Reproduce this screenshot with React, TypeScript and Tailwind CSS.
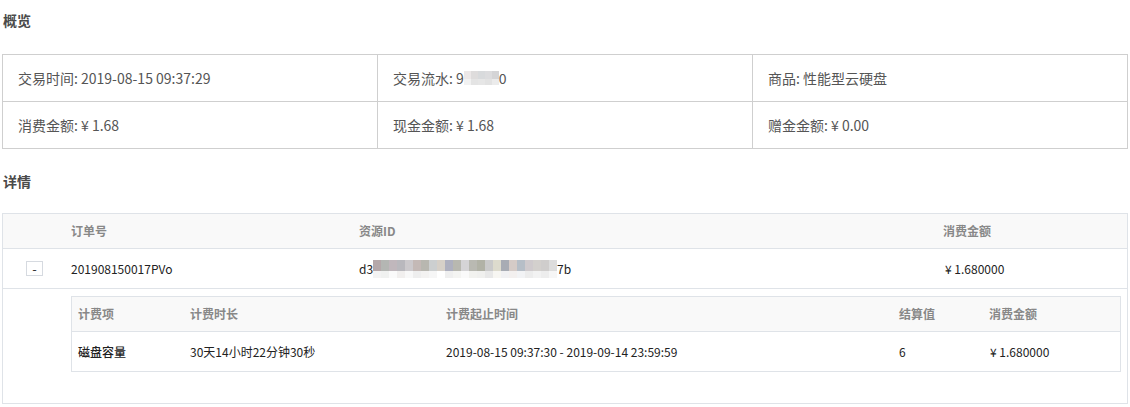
import React from "react";

const overview = [
  [
    { label: "交易时间", value: "2019-08-15 09:37:29" },
    { label: "交易流水", value: "serial" },
    { label: "商品", value: "性能型云硬盘" },
  ],
  [
    { label: "消费金额", value: "¥ 1.68" },
    { label: "现金金额", value: "¥ 1.68" },
    { label: "赠金金额", value: "¥ 0.00" },
  ],
];

const idTop = [
  "#b5a8aa", "#b4b6b3", "#c0b7bc", "#b9b8bd", "#ccc9cc", "#c4b9b6", "#b8b7b0", "#cccfd0",
  "#d6d0c8", "#aeb0bf", "#b8b8b0", "#d5d4d6", "#b9b9b2", "#b1b2a6", "#cacaca", "#dddbcd",
  "#a8acb4", "#d5cbc7", "#b6bec7", "#cfcacd", "#d3d0cd", "#cfcdcc", "#dcdcdc",
];
const idBottom = [
  "#f3f3f3", "#f0f1f0", "#fafafa", "#f1efee", "#f8f8f8", "#eeeeee", "#f3f2f1", "#f6f6f6",
  "#ffffff", "#efefef", "#f4f4f2", "#fafafa", "#f2f2ef", "#f0f0ee", "#e8e8e8", "#f7f6f2",
  "#f1f1f3", "#f3f0ef", "#f2f3f5", "#ececec", "#f2f2f2", "#ededed", "#f6f6f6",
];
const serialTop = ["#ece8e8", "#dedcdc", "#d8dadc", "#dcdcde", "#d4d4d6"];
const serialBottom = ["#f2f2f2", "#e4e4e4", "#e6e6e6", "#e2e2e2", "#ebebeb"];

function Mosaic({ top, bottom, w, th, bh }: { top: string[]; bottom: string[]; w: number; th: number; bh: number }) {
  return (
    <span className="inline-flex flex-col align-middle">
      <span className="flex">
        {top.map((c, i) => (
          <span key={i} style={{ background: c, width: w, height: th }} />
        ))}
      </span>
      <span className="flex">
        {bottom.map((c, i) => (
          <span key={i} style={{ background: c, width: w, height: bh }} />
        ))}
      </span>
    </span>
  );
}

export default function App() {
  return (
    <div className="w-[1130px] h-[407px] bg-white px-[2px] pt-[10px] font-['Noto_Sans_CJK_SC',sans-serif] overflow-hidden">
      <div className="h-[20px] pl-px text-[14px] leading-[20px] font-bold text-[#4a4a4a]">概览</div>

      <div className="mt-[24px] border border-[#cfcfcf]">
        {overview.map((row, r) => (
          <div key={r} className={`grid grid-cols-[374px_375px_1fr] ${r > 0 ? "border-t border-[#cfcfcf]" : ""}`}>
            {row.map((cell, c) => (
              <div
                key={c}
                className={`h-[46px] flex items-center pl-[15px] text-[14px] text-[#555] ${c > 0 ? "border-l border-[#cfcfcf]" : ""}`}
              >
                {cell.value === "serial" ? (
                  <span className="flex items-center">
                    {cell.label}: 9
                    <Mosaic top={serialTop} bottom={serialBottom} w={7} th={8} bh={6} />
                    0
                  </span>
                ) : (
                  <span>
                    {cell.label}: {cell.value}
                  </span>
                )}
              </div>
            ))}
          </div>
        ))}
      </div>

      <div className="mt-[22px] h-[20px] pl-px text-[14px] leading-[20px] font-bold text-[#4a4a4a]">详情</div>

      <div className="mt-[22px] border border-[#dfe3e8] text-[12px]">
        <div className="grid grid-cols-[68px_288px_584px_1fr] h-[35px] items-center bg-[#f9f9f9] border-b border-[#dfe3e8] font-bold text-[#888]">
          <div />
          <div>订单号</div>
          <div>资源ID</div>
          <div>消费金额</div>
        </div>
        <div className="grid grid-cols-[68px_288px_584px_1fr] h-[40px] items-center border-b border-[#dfe3e8] text-[#222]">
          <div className="pl-[23px]">
            <button className="w-[17px] h-[15px] border border-[#d6dae0] bg-white flex items-center justify-center text-[13px] leading-none text-[#333]">
              -
            </button>
          </div>
          <div>201908150017PVo</div>
          <div className="flex items-center">
            d3
            <Mosaic top={idTop} bottom={idBottom} w={8} th={11} bh={7} />
            7b
          </div>
          <div className="pl-[2px]">¥ 1.680000</div>
        </div>
        <div className="pt-[7px] pb-[31px] pl-[68px] pr-[6px]">
          <div className="border border-[#dfe3e8]">
            <div className="grid grid-cols-[112px_256px_453px_90px_1fr] h-[35px] items-center pl-[6px] bg-[#f9f9f9] border-b border-[#dfe3e8] font-bold text-[#888]">
              <div>计费项</div>
              <div>计费时长</div>
              <div>计费起止时间</div>
              <div>结算值</div>
              <div>消费金额</div>
            </div>
            <div className="grid grid-cols-[112px_256px_453px_90px_1fr] h-[39px] items-center pl-[6px] text-[#222]">
              <div className="font-medium">磁盘容量</div>
              <div>30天14小时22分钟30秒</div>
              <div>2019-08-15 09:37:30 - 2019-09-14 23:59:59</div>
              <div>6</div>
              <div className="pl-px">¥ 1.680000</div>
            </div>
          </div>
        </div>
      </div>
    </div>
  );
}
